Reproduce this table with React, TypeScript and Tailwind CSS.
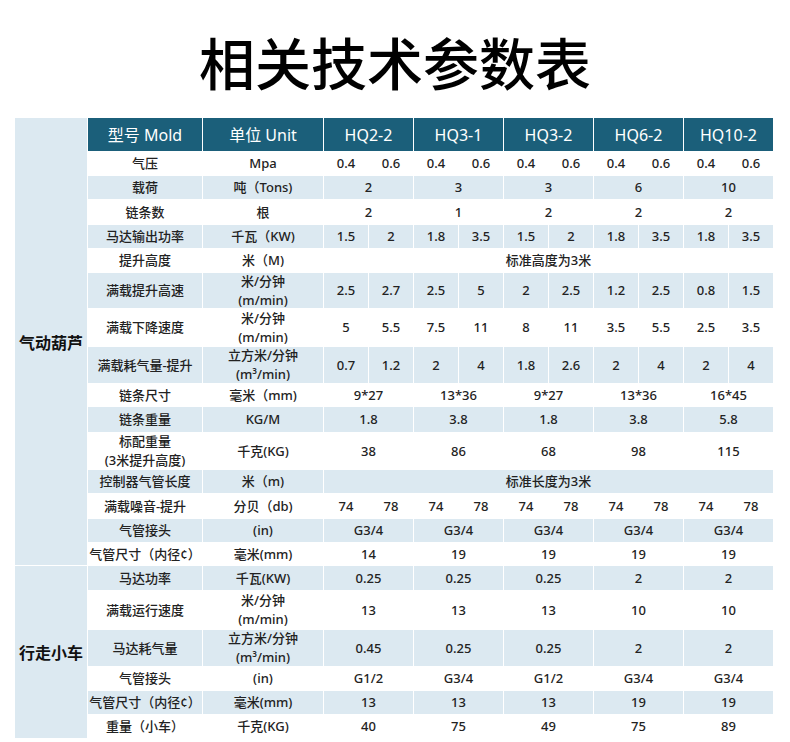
import React from "react";

type Cell = { t: string; s: 1 | 2 | 10 };
type Row = { label: string[]; unit: string[]; values: Cell[] };

const split = (...v: string[]): Cell[] => v.map((t) => ({ t, s: 1 as const }));
const merged = (...v: string[]): Cell[] => v.map((t) => ({ t, s: 2 as const }));
const full = (t: string): Cell[] => [{ t, s: 10 }];

const sec1: Row[] = [
  { label: ["气压"], unit: ["Mpa"], values: split("0.4", "0.6", "0.4", "0.6", "0.4", "0.6", "0.4", "0.6", "0.4", "0.6") },
  { label: ["载荷"], unit: ["吨（Tons)"], values: merged("2", "3", "3", "6", "10") },
  { label: ["链条数"], unit: ["根"], values: merged("2", "1", "2", "2", "2") },
  { label: ["马达输出功率"], unit: ["千瓦（KW)"], values: split("1.5", "2", "1.8", "3.5", "1.5", "2", "1.8", "3.5", "1.8", "3.5") },
  { label: ["提升高度"], unit: ["米（M)"], values: full("标准高度为3米") },
  { label: ["满载提升高速"], unit: ["米/分钟", "(m/min)"], values: split("2.5", "2.7", "2.5", "5", "2", "2.5", "1.2", "2.5", "0.8", "1.5") },
  { label: ["满载下降速度"], unit: ["米/分钟", "(m/min)"], values: split("5", "5.5", "7.5", "11", "8", "11", "3.5", "5.5", "2.5", "3.5") },
  { label: ["满载耗气量-提升"], unit: ["立方米/分钟", "(m³/min)"], values: split("0.7", "1.2", "2", "4", "1.8", "2.6", "2", "4", "2", "4") },
  { label: ["链条尺寸"], unit: ["毫米（mm)"], values: merged("9*27", "13*36", "9*27", "13*36", "16*45") },
  { label: ["链条重量"], unit: ["KG/M"], values: merged("1.8", "3.8", "1.8", "3.8", "5.8") },
  { label: ["标配重量", "(3米提升高度)"], unit: ["千克(KG)"], values: merged("38", "86", "68", "98", "115") },
  { label: ["控制器气管长度"], unit: ["米（m)"], values: full("标准长度为3米") },
  { label: ["满载噪音-提升"], unit: ["分贝（db)"], values: split("74", "78", "74", "78", "74", "78", "74", "78", "74", "78") },
  { label: ["气管接头"], unit: ["(in)"], values: merged("G3/4", "G3/4", "G3/4", "G3/4", "G3/4") },
  { label: ["气管尺寸（内径¢）"], unit: ["毫米(mm)"], values: merged("14", "19", "19", "19", "19") },
];

const sec2: Row[] = [
  { label: ["马达功率"], unit: ["千瓦(KW)"], values: merged("0.25", "0.25", "0.25", "2", "2") },
  { label: ["满载运行速度"], unit: ["米/分钟", "(m/min)"], values: merged("13", "13", "13", "10", "10") },
  { label: ["马达耗气量"], unit: ["立方米/分钟", "(m³/min)"], values: merged("0.45", "0.25", "0.25", "2", "2") },
  { label: ["气管接头"], unit: ["(in)"], values: merged("G1/2", "G3/4", "G1/2", "G3/4", "G3/4") },
  { label: ["气管尺寸（内径¢）"], unit: ["毫米(mm)"], values: merged("13", "13", "13", "19", "19") },
  { label: ["重量（小车）"], unit: ["千克(KG)"], values: merged("40", "75", "49", "75", "89") },
];

const spanClass: Record<number, string> = { 1: "", 2: "col-span-2", 10: "col-span-10" };

const cellBase =
  "flex flex-col items-center justify-center text-center whitespace-nowrap text-[13px] leading-[19px] text-[#222] font-medium";

function Lines({ lines }: { lines: string[] }) {
  return (
    <>
      {lines.map((l, i) => (
        <span key={i}>{l}</span>
      ))}
    </>
  );
}

function renderRows(rows: Row[], offset: number) {
  return rows.map((r, i) => {
    const blue = (i + offset) % 2 === 1;
    const bg = blue ? "bg-[#dce9f1]" : "bg-white";
    return (
      <React.Fragment key={`${offset}-${i}`}>
        <div className={`${cellBase} ${bg}`}>
          <Lines lines={r.label} />
        </div>
        <div className={`${cellBase} ${bg}`}>
          <Lines lines={r.unit} />
        </div>
        {r.values.map((v, j) => (
          <div key={j} className={`${cellBase} ${bg} ${spanClass[v.s]}`}>
            {v.t}
          </div>
        ))}
      </React.Fragment>
    );
  });
}

const headers = ["HQ2-2", "HQ3-1", "HQ3-2", "HQ6-2", "HQ10-2"];

export default function App() {
  return (
    <div className="w-[790px] h-[742px] overflow-hidden bg-white font-['Noto_Sans','Noto_Sans_CJK_SC',sans-serif]">
      <h1 className="pt-[33px] text-center text-[56px] leading-[56px] font-medium text-black font-['Noto_Sans_CJK_SC',sans-serif]">
        相关技术参数表
      </h1>
      <div className="mt-[29px] ml-[15px] w-[758px] grid gap-px bg-white grid-cols-[72px_114px_120px_repeat(10,44px)] grid-rows-[33px_23px_23px_24px_23px_23px_35px_37px_36px_22px_25px_36px_23px_24px_23px_22px_24px_38px_36px_23px_23px_23px]">
        <div className="row-span-16 bg-[#dce9f1] flex items-center justify-center text-[16px] font-bold text-[#111] font-['Noto_Sans_CJK_SC',sans-serif]">
          气动葫芦
        </div>
        <div className="bg-[#1b5f7a] text-white text-[16px] flex items-center justify-center whitespace-nowrap">
          型号 Mold
        </div>
        <div className="bg-[#1b5f7a] text-white text-[16px] flex items-center justify-center whitespace-nowrap">
          单位 Unit
        </div>
        {headers.map((h) => (
          <div
            key={h}
            className="col-span-2 bg-[#1b5f7a] text-white text-[16px] flex items-center justify-center whitespace-nowrap"
          >
            {h}
          </div>
        ))}
        {renderRows(sec1, 0)}
        <div className="row-span-6 bg-[#dce9f1] flex items-center justify-center text-[16px] font-bold text-[#111] font-['Noto_Sans_CJK_SC',sans-serif]">
          行走小车
        </div>
        {renderRows(sec2, 1)}
      </div>
    </div>
  );
}
